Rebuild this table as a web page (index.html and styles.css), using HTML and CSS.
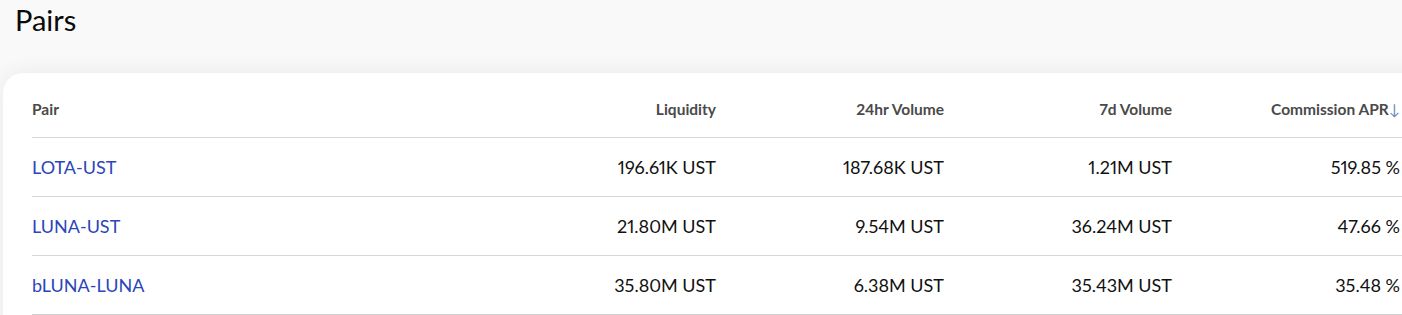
FILE: index.html
```html
<!DOCTYPE html>
<html lang="en">
<head>
<meta charset="utf-8">
<title>Pairs</title>
<link rel="stylesheet" href="styles.css">
</head>
<body>
<h1 class="title">Pairs</h1>
<section class="card">
  <div class="table">
    <div class="row head">
      <div class="cell left">Pair</div>
      <div class="cell">Liquidity</div>
      <div class="cell">24hr Volume</div>
      <div class="cell">7d Volume</div>
      <div class="cell">Commission APR<span class="arrow">↓</span></div>
    </div>
    <div class="row">
      <div class="cell left"><a class="pair" href="#">LOTA-UST</a></div>
      <div class="cell">196.61K UST</div>
      <div class="cell">187.68K UST</div>
      <div class="cell">1.21M UST</div>
      <div class="cell">519.85 %</div>
    </div>
    <div class="row">
      <div class="cell left"><a class="pair" href="#">LUNA-UST</a></div>
      <div class="cell">21.80M UST</div>
      <div class="cell">9.54M UST</div>
      <div class="cell">36.24M UST</div>
      <div class="cell">47.66 %</div>
    </div>
    <div class="row">
      <div class="cell left"><a class="pair" href="#">bLUNA-LUNA</a></div>
      <div class="cell">35.80M UST</div>
      <div class="cell">6.38M UST</div>
      <div class="cell">35.43M UST</div>
      <div class="cell">35.48 %</div>
    </div>
  </div>
</section>
</body>
</html>
```

FILE: styles.css
```css
html, body {
  margin: 0;
  padding: 0;
}
body {
  width: 1402px;
  height: 315px;
  overflow: hidden;
  background: #f9f9f9;
  font-family: Lato, "Open Sans", sans-serif;
  color: #111;
}
.title {
  margin: 0;
  padding: 2px 0 0 15px;
  font-size: 29px;
  line-height: 36px;
  font-weight: 400;
  color: #0a0a0a;
}
.card {
  margin: 35px 0 0 3px;
  width: 1430px;
  background: #fff;
  border-radius: 20px;
  box-shadow: 0 0 22px rgba(0, 0, 0, 0.07);
  padding: 0 0 40px 29px;
  box-sizing: border-box;
}
.table {
  display: flex;
  flex-direction: column;
}
.row {
  display: grid;
  grid-template-columns: 456px repeat(4, 228px);
  padding-right: 30px;
  height: 58px;
  align-items: center;
  border-bottom: 1px solid #d8d8d8;
  font-size: 18px;
  color: #111;
  font-variant-numeric: proportional-nums;
}
.row.head {
  height: 65px;
  align-items: end;
  padding-bottom: 17px;
  box-sizing: border-box;
  font-size: 15.5px;
  font-weight: 700;
  color: #4a4a4a;
}
.row:last-child {
  border-bottom: 2px solid #d0d0d0;
}
.cell {
  text-align: right;
  white-space: nowrap;
  line-height: 22px;
}
.cell.left {
  text-align: left;
}
.pair {
  color: #2a46b8;
  text-decoration: none;
}
.arrow {
  color: #6d87c4;
  font-weight: 400;
  font-size: 15px;
}
```
